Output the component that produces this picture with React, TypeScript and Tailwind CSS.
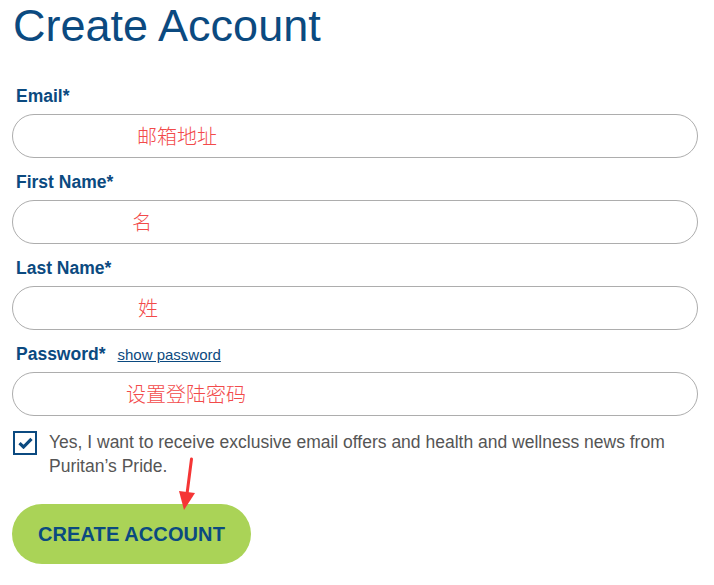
const blue = 'text-[#0b4a80]'

function Field({
  label,
  note,
  noteOffset,
  extra,
}: {
  label: string
  note: string
  noteOffset: string
  extra?: React.ReactNode
}) {
  return (
    <div className="mt-3 first:mt-0">
      <div className="h-[24px] flex items-baseline pl-1">
        <label className={`text-[17.5px] leading-[24px] font-bold ${blue}`}>{label}</label>
        {extra}
      </div>
      <div className="mt-[6px] h-[44px] rounded-full border border-[#adadad] bg-white flex items-center">
        <span
          className={`${noteOffset} text-[20px] leading-none text-[#f24a4a]`}
          style={{ fontFamily: '"Noto Sans CJK SC", sans-serif', fontWeight: 300 }}
        >
          {note}
        </span>
      </div>
    </div>
  )
}

export default function App() {
  return (
    <div
      className="relative w-[714px] h-[585px] bg-white pl-3 pr-4 pt-[3px] overflow-hidden"
      style={{ fontFamily: '"Liberation Sans", Arial, sans-serif' }}
    >
      <h1 className={`text-[45px] leading-none pl-px ${blue}`}>Create Account</h1>

      <form className="mt-[36px]">
        <Field label="Email*" note="邮箱地址" noteOffset="ml-[124px]" />
        <Field label="First Name*" note="名" noteOffset="ml-[119px]" />
        <Field label="Last Name*" note="姓" noteOffset="ml-[125px]" />
        <Field
          label="Password*"
          note="设置登陆密码"
          noteOffset="ml-[113px]"
          extra={
            <a href="#" className={`ml-[12px] text-[15px] leading-none underline ${blue}`}>
              show password
            </a>
          }
        />

        <div className="mt-[14px] flex items-start">
          <span className="mt-px ml-px w-[24px] h-[24px] shrink-0 border-2 border-[#0b4a80] flex items-center justify-center">
            <svg width="15" height="12" viewBox="0 0 15 12">
              <path d="M1.5 6.2 L5.5 10 L13.5 1.8" fill="none" stroke="#0b4a80" strokeWidth="3.2" />
            </svg>
          </span>
          <p className="ml-[12px] text-[17.5px] leading-[24px] text-[#555]">
            Yes, I want to receive exclusive email offers and health and wellness news from Puritan’s Pride.
          </p>
        </div>

        <button
          type="button"
          className={`mt-[26px] h-[60px] px-[26px] rounded-full bg-[#aad357] text-[20px] font-bold tracking-[0.1px] ${blue}`}
        >
          CREATE ACCOUNT
        </button>
      </form>

      <svg className="absolute left-[176px] top-[456px]" width="24" height="56" viewBox="0 0 24 56">
        <path d="M15.5 3 L11 38" stroke="#f53535" strokeWidth="3" strokeLinecap="round" />
        <path d="M3 35 L19 37 L8 54 Z" fill="#f53535" />
      </svg>
    </div>
  )
}
